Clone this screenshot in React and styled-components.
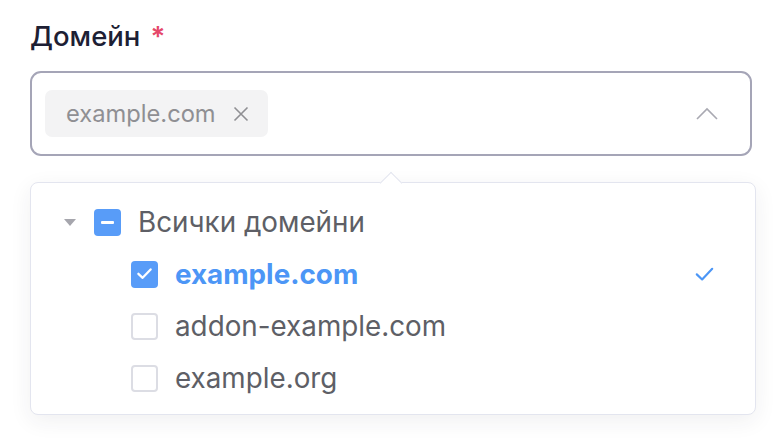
import React from "react";
import styled, { createGlobalStyle } from "styled-components";

const Global = createGlobalStyle`
  html, body { margin: 0; padding: 0; background: #ffffff; }
  body { font-family: Inter, "Noto Sans", sans-serif; -webkit-font-smoothing: antialiased; }
`;

const Page = styled.div`
  width: 784px;
  height: 444px;
  box-sizing: border-box;
  padding: 18px 28px 0 30px;
`;

const Label = styled.div`
  font-size: 27.5px;
  font-weight: 500;
  color: #1d2034;
  line-height: 36px;
  display: flex;
  align-items: center;
  gap: 10px;
  margin-bottom: 17px;
`;

const Required = styled.span`
  color: #e5486a;
  font-weight: 600;
`;

const Select = styled.div`
  box-sizing: border-box;
  width: 722px;
  height: 85px;
  border: 2px solid #a5a5b7;
  border-radius: 11px;
  display: flex;
  align-items: center;
  justify-content: space-between;
  padding: 0 32px 0 13px;
`;

const Tag = styled.div`
  box-sizing: border-box;
  height: 47px;
  display: flex;
  align-items: center;
  gap: 17px;
  padding: 0 19px 0 21px;
  background: #f3f3f4;
  border-radius: 7px;
  font-size: 23.7px;
  color: #8f8f93;
`;

const Dropdown = styled.div`
  position: relative;
  box-sizing: border-box;
  width: 726px;
  margin-top: 26px;
  border: 1px solid #e3e5ef;
  border-radius: 8px;
  background: #fff;
  box-shadow: 0 6px 22px rgba(40, 40, 60, 0.07);
  padding: 13px 0 10px;
`;

const Arrow = styled.div`
  position: absolute;
  top: -8px;
  left: 352px;
  width: 15px;
  height: 15px;
  background: #fff;
  border-top: 1px solid #e3e5ef;
  border-left: 1px solid #e3e5ef;
  transform: rotate(45deg);
`;

const Row = styled.div`
  height: 52px;
  display: flex;
  align-items: center;
  padding-left: ${(p) => (p.$child ? "100px" : "33px")};
  padding-right: 41px;
  font-size: 27.8px;
  color: ${(p) => (p.$active ? "#4c96f6" : "#5e5f66")};
  font-weight: ${(p) => (p.$active ? 700 : 400)};
`;

const Caret = styled.span`
  width: 0;
  height: 0;
  border-left: 6.5px solid transparent;
  border-right: 6.5px solid transparent;
  border-top: 7px solid #a6a6ad;
  margin-right: 18px;
`;

const Box = styled.span`
  box-sizing: border-box;
  flex: none;
  width: 27px;
  height: 27px;
  border-radius: 4px;
  margin-right: 17px;
  display: flex;
  align-items: center;
  justify-content: center;
  background: ${(p) => (p.$on ? "#589cf8" : "#fff")};
  border: ${(p) => (p.$on ? "none" : "2px solid #dcdde4")};
`;

const Text = styled.span`
  flex: 1;
`;

const Chevron = () => (
  <svg width="22" height="13" viewBox="0 0 22 13" fill="none">
    <path d="M1 12L11 2L21 12" stroke="#a9a9b2" strokeWidth="1.6" />
  </svg>
);

const Close = () => (
  <svg width="16" height="16" viewBox="0 0 16 16" fill="none">
    <path d="M1.5 1.5L14.5 14.5M14.5 1.5L1.5 14.5" stroke="#8f8f93" strokeWidth="1.6" />
  </svg>
);

const Tick = ({ color = "#fff", w = 15, sw = 2.4 }) => (
  <svg width={w} height={w * 0.75} viewBox="0 0 16 12" fill="none">
    <path d="M1.5 6.2L6 10.5L14.5 1.5" stroke={color} strokeWidth={sw} strokeLinecap="round" strokeLinejoin="round" />
  </svg>
);

const Minus = styled.span`
  width: 13px;
  height: 3px;
  border-radius: 1px;
  background: #fff;
`;

export default function App() {
  return (
    <Page>
      <Global />
      <Label>
        Домейн <Required>*</Required>
      </Label>
      <Select>
        <Tag>
          example.com
          <Close />
        </Tag>
        <Chevron />
      </Select>
      <Dropdown>
        <Arrow />
        <Row>
          <Caret />
          <Box $on>
            <Minus />
          </Box>
          <Text>Всички домейни</Text>
        </Row>
        <Row $child $active>
          <Box $on>
            <Tick />
          </Box>
          <Text>example.com</Text>
          <Tick color="#4c96f6" w={19} sw={1.8} />
        </Row>
        <Row $child>
          <Box />
          <Text>addon-example.com</Text>
        </Row>
        <Row $child>
          <Box />
          <Text>example.org</Text>
        </Row>
      </Dropdown>
    </Page>
  );
}
